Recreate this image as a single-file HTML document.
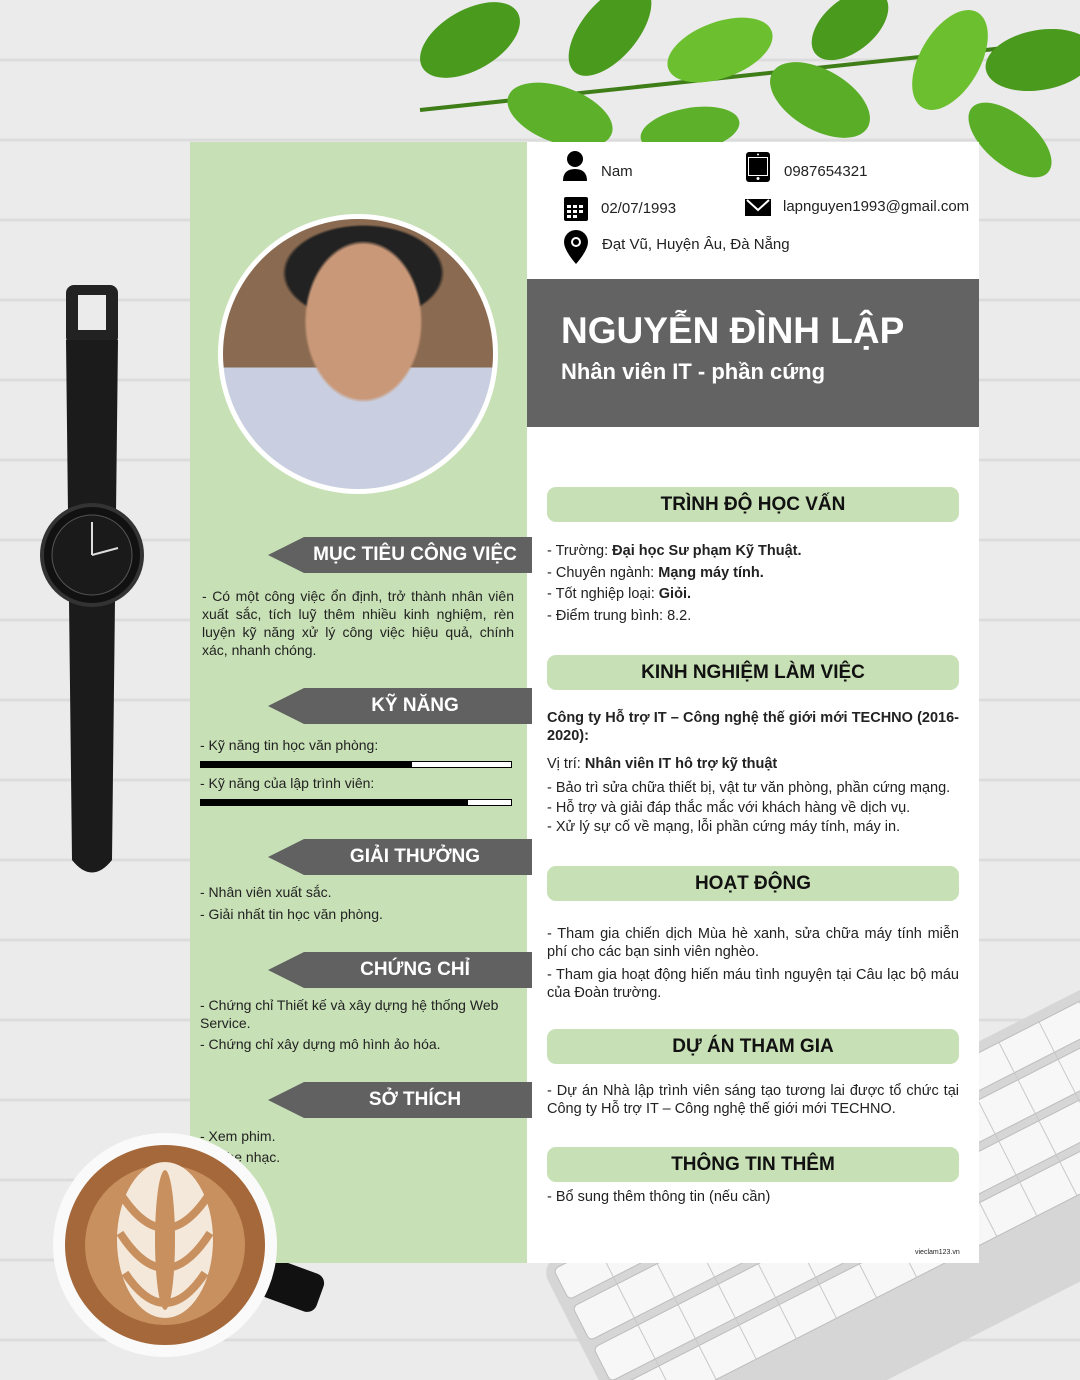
<!DOCTYPE html>
<html><head><meta charset="utf-8">
<style>
*{margin:0;padding:0;box-sizing:border-box}
body{width:1080px;height:1380px;position:relative;overflow:hidden;background:#ebebeb;font-family:"Liberation Sans",sans-serif;color:#222}
.a{position:absolute}
.t{font-size:14px;line-height:18px}
.r{font-size:14.5px}
.lb{position:absolute;left:268px;width:264px;height:36px;background:#616161;clip-path:polygon(0 50%,36px 0,100% 0,100% 100%,36px 100%);color:#fff;font-weight:bold;font-size:19px;line-height:36px;text-align:center;padding-left:30px}
.rb{position:absolute;left:547px;width:412px;height:35px;background:#c7e0b5;border-radius:9px;text-align:center;font-weight:bold;font-size:19px;line-height:35px;color:#111}
.bar{position:absolute;left:200px;width:312px;height:7px;border:1px solid #000;background:#fff}
.bar i{display:block;height:100%;background:#000}
b{font-weight:bold}
.j{text-align:justify}
</style></head><body>
<svg class="a" style="left:0;top:0" width="1080" height="1380">
<g stroke="#dcdcdc" stroke-width="3">
<line x1="0" y1="60" x2="1080" y2="60"/><line x1="0" y1="140" x2="1080" y2="140"/><line x1="0" y1="220" x2="1080" y2="220"/><line x1="0" y1="300" x2="1080" y2="300"/><line x1="0" y1="380" x2="1080" y2="380"/><line x1="0" y1="460" x2="1080" y2="460"/><line x1="0" y1="540" x2="1080" y2="540"/><line x1="0" y1="620" x2="1080" y2="620"/><line x1="0" y1="700" x2="1080" y2="700"/><line x1="0" y1="780" x2="1080" y2="780"/><line x1="0" y1="860" x2="1080" y2="860"/><line x1="0" y1="940" x2="1080" y2="940"/><line x1="0" y1="1020" x2="1080" y2="1020"/><line x1="0" y1="1100" x2="1080" y2="1100"/><line x1="0" y1="1180" x2="1080" y2="1180"/><line x1="0" y1="1260" x2="1080" y2="1260"/><line x1="0" y1="1340" x2="1080" y2="1340"/>
</g>
<path d="M420 110 Q700 80 1080 40" stroke="#3f7d18" stroke-width="4" fill="none"/>
<g fill="#4a9a1e">
<ellipse cx="470" cy="40" rx="55" ry="30" transform="rotate(-30 470 40)"/>
<ellipse cx="560" cy="115" rx="55" ry="28" transform="rotate(20 560 115)" fill="#5cb02a"/>
<ellipse cx="610" cy="30" rx="55" ry="28" transform="rotate(-50 610 30)"/>
<ellipse cx="720" cy="50" rx="55" ry="28" transform="rotate(-20 720 50)" fill="#6cbf2e"/>
<ellipse cx="820" cy="100" rx="55" ry="30" transform="rotate(30 820 100)" fill="#5aae27"/>
<ellipse cx="850" cy="25" rx="45" ry="26" transform="rotate(-40 850 25)"/>
<ellipse cx="950" cy="60" rx="55" ry="30" transform="rotate(-60 950 60)" fill="#6cbf2e"/>
<ellipse cx="1040" cy="60" rx="55" ry="30" transform="rotate(-10 1040 60)"/>
<ellipse cx="1010" cy="140" rx="50" ry="25" transform="rotate(40 1010 140)" fill="#5aae27"/>
<ellipse cx="690" cy="130" rx="50" ry="22" transform="rotate(-10 690 130)" fill="#5cb02a"/>
</g>
<!-- watch -->
<rect x="66" y="285" width="52" height="60" rx="8" fill="#222"/>
<rect x="78" y="295" width="28" height="35" fill="#ebebeb"/>
<path d="M66 340 L118 340 L112 860 Q92 885 72 860 Z" fill="#1b1b1b"/>
<circle cx="92" cy="555" r="50" fill="#111" stroke="#333" stroke-width="4"/>
<circle cx="92" cy="555" r="40" fill="#1a1a1a" stroke="#555"/>
<line x1="92" y1="555" x2="92" y2="522" stroke="#ddd" stroke-width="2"/>
<line x1="92" y1="555" x2="118" y2="548" stroke="#ddd" stroke-width="2"/>
<!-- keyboard -->
<g transform="translate(540 1265) rotate(-27)">
<rect x="0" y="0" width="700" height="260" rx="18" fill="#d6d6d6"/>
<g fill="#f7f7f7" stroke="#bdbdbd">
<rect x="10" y="10" width="680" height="34" rx="5"/>
<rect x="10" y="52" width="680" height="38" rx="5"/>
<rect x="10" y="98" width="680" height="38" rx="5"/>
<rect x="10" y="144" width="680" height="38" rx="5"/>
</g>
<g stroke="#c8c8c8">
<line x1="60" y1="10" x2="60" y2="182"/><line x1="105" y1="10" x2="105" y2="182"/><line x1="150" y1="10" x2="150" y2="182"/><line x1="195" y1="10" x2="195" y2="182"/><line x1="240" y1="10" x2="240" y2="182"/><line x1="285" y1="10" x2="285" y2="182"/><line x1="330" y1="10" x2="330" y2="182"/><line x1="375" y1="10" x2="375" y2="182"/><line x1="420" y1="10" x2="420" y2="182"/><line x1="465" y1="10" x2="465" y2="182"/><line x1="510" y1="10" x2="510" y2="182"/><line x1="555" y1="10" x2="555" y2="182"/><line x1="600" y1="10" x2="600" y2="182"/><line x1="645" y1="10" x2="645" y2="182"/>
</g>
</g>
<!-- coffee -->
<rect x="262" y="1265" width="60" height="40" rx="10" fill="#111" transform="rotate(20 290 1285)"/>
</svg>

<div class="a" style="left:190px;top:142px;width:337px;height:1121px;background:#c7e0b5"></div>
<div class="a" style="left:527px;top:142px;width:452px;height:1121px;background:#fff"></div>
<div class="a" style="left:527px;top:279px;width:452px;height:148px;background:#636363"></div>
<div class="a" style="left:561px;top:308px;color:#fff;font-weight:bold;font-size:37px;line-height:46px">NGUYỄN ĐÌNH LẬP</div>
<div class="a" style="left:561px;top:357px;color:#fff;font-weight:bold;font-size:22px;line-height:30px">Nhân viên IT - phần cứng</div>

<div class="a" style="left:218px;top:214px;width:280px;height:280px;border-radius:50%;background:#fff;padding:5px">
 <div style="width:100%;height:100%;border-radius:50%;background:radial-gradient(ellipse 22% 30% at 52% 38%,#c99878 0 95%,transparent 100%),radial-gradient(ellipse 30% 18% at 52% 20%,#222 0 95%,transparent 100%),linear-gradient(#8a6a50 0 55%,#c9cfe0 55%);"></div>
</div>

<svg class="a" style="left:560px;top:150px" width="420" height="120">
<circle cx="15" cy="9" r="8"/><path d="M3 31 Q3 19 15 19 Q27 19 27 31 Z"/>
<rect x="186" y="2" width="24" height="30" rx="3"/><rect x="188" y="7" width="20" height="19" fill="#fff"/><rect x="189" y="8" width="18" height="17"/><circle cx="198" cy="28.5" r="1.5" fill="#fff"/><circle cx="198" cy="4.5" r="1" fill="#fff"/>
<rect x="4" y="47" width="24" height="24" rx="2"/><g fill="#fff"><rect x="7" y="55" width="4" height="3"/><rect x="13" y="55" width="4" height="3"/><rect x="19" y="55" width="4" height="3"/><rect x="7" y="60" width="4" height="3"/><rect x="13" y="60" width="4" height="3"/><rect x="19" y="60" width="4" height="3"/><rect x="7" y="65" width="4" height="3"/><rect x="13" y="65" width="4" height="3"/></g>
<path d="M185 49 H211 V66 H185 Z"/><path d="M187 50 L198 60 L209 50" stroke="#fff" stroke-width="2" fill="none"/>
<path d="M16 80 A12 12 0 0 1 28 92 Q28 100 16 114 Q4 100 4 92 A12 12 0 0 1 16 80 Z"/><circle cx="16" cy="92" r="5" fill="#fff"/><circle cx="16" cy="92" r="3"/>
</svg>
<div class="a" style="left:601px;top:163px;font-size:15px">Nam</div>
<div class="a" style="left:784px;top:163px;font-size:15px">0987654321</div>
<div class="a" style="left:601px;top:200px;font-size:15px">02/07/1993</div>
<div class="a" style="left:783px;top:198px;font-size:15px">lapnguyen1993@gmail.com</div>
<div class="a" style="left:602px;top:236px;font-size:15px">Đạt Vũ, Huyện Âu, Đà Nẵng</div>

<div class="lb" style="top:537px">MỤC TIÊU CÔNG VIỆC</div>
<div class="a t j" style="left:202px;top:587px;width:312px">- Có một công việc ổn định, trở thành nhân viên xuất sắc, tích luỹ thêm nhiều kinh nghiệm, rèn luyện kỹ năng xử lý công việc hiệu quả, chính xác, nhanh chóng.</div>
<div class="lb" style="top:688px">KỸ NĂNG</div>
<div class="a t" style="left:200px;top:736px">- Kỹ năng tin học văn phòng:</div>
<div class="bar" style="top:761px"><i style="width:68%"></i></div>
<div class="a t" style="left:200px;top:774px">- Kỹ năng của lập trình viên:</div>
<div class="bar" style="top:799px"><i style="width:86%"></i></div>
<div class="lb" style="top:839px">GIẢI THƯỞNG</div>
<div class="a t" style="left:200px;top:883px">- Nhân viên xuất sắc.<br><span style="line-height:26px">- Giải nhất tin học văn phòng.</span></div>
<div class="lb" style="top:952px">CHỨNG CHỈ</div>
<div class="a t" style="left:200px;top:996px;width:320px">- Chứng chỉ Thiết kế và xây dựng hệ thống Web Service.<br><span style="line-height:24px">- Chứng chỉ xây dựng mô hình ảo hóa.</span></div>
<div class="lb" style="top:1082px">SỞ THÍCH</div>
<div class="a t" style="left:200px;top:1126px;line-height:21px">- Xem phim.<br>- Nghe nhạc.</div>
<svg class="a" style="left:0;top:1133px" width="290" height="225"><circle cx="165" cy="112" r="112" fill="#fafafa"/><circle cx="165" cy="112" r="100" fill="#a5683a"/><circle cx="165" cy="112" r="80" fill="#c8905f"/><ellipse cx="165" cy="107" rx="48" ry="78" fill="#f4e8da"/><ellipse cx="165" cy="107" rx="10" ry="70" fill="#c8905f"/><path d="M120 60 Q165 130 210 60 M120 100 Q165 170 210 100 M125 140 Q165 200 205 140" stroke="#c8905f" stroke-width="8" fill="none"/></svg>

<div class="rb" style="top:487px">TRÌNH ĐỘ HỌC VẤN</div>
<div class="a t r" style="left:547px;top:541px;line-height:21.5px">- Trường: <b>Đại học Sư phạm Kỹ Thuật.</b><br>- Chuyên ngành: <b>Mạng máy tính.</b><br>- Tốt nghiệp loại: <b>Giỏi.</b><br>- Điểm trung bình: 8.2.</div>
<div class="rb" style="top:655px">KINH NGHIỆM LÀM VIỆC</div>
<div class="a t r j" style="left:547px;top:709px;width:412px;font-weight:bold;text-align-last:left">Công ty Hỗ trợ IT – Công nghệ thế giới mới TECHNO (2016-2020):</div>
<div class="a t r" style="left:547px;top:755px">Vị trí: <b>Nhân viên IT hô trợ kỹ thuật</b></div>
<div class="a t r" style="left:547px;top:779px;line-height:19.5px">- Bảo trì sửa chữa thiết bị, vật tư văn phòng, phần cứng mạng.<br>- Hỗ trợ và giải đáp thắc mắc với khách hàng về dịch vụ.<br>- Xử lý sự cố về mạng, lỗi phần cứng máy tính, máy in.</div>
<div class="rb" style="top:866px">HOẠT ĐỘNG</div>
<div class="a t r j" style="left:547px;top:925px;width:412px">- Tham gia chiến dịch Mùa hè xanh, sửa chữa máy tính miễn phí cho các bạn sinh viên nghèo.</div>
<div class="a t r j" style="left:547px;top:966px;width:412px">- Tham gia hoạt động hiến máu tình nguyện tại Câu lạc bộ máu của Đoàn trường.</div>
<div class="rb" style="top:1029px">DỰ ÁN THAM GIA</div>
<div class="a t r j" style="left:547px;top:1082px;width:412px">- Dự án Nhà lập trình viên sáng tạo tương lai được tổ chức tại Công ty Hỗ trợ IT – Công nghệ thế giới mới TECHNO.</div>
<div class="rb" style="top:1147px">THÔNG TIN THÊM</div>
<div class="a t r" style="left:547px;top:1188px">- Bổ sung thêm thông tin (nếu cần)</div>
<div class="a" style="left:915px;top:1249px;font-size:7px">vieclam123.vn</div>
</body></html>
